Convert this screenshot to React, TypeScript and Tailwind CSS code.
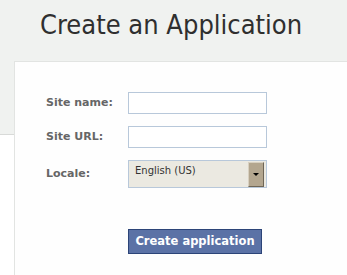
import React from 'react';

export default function App() {
  return (
    <div className="w-[347px] h-[275px] overflow-hidden bg-white font-['DejaVu_Sans',sans-serif]">
      {/* header */}
      <div className="h-[135px] bg-[#f0f2f0] border-b border-[#d8dad8]">
        <h1 className="pl-[40px] pt-[9px] text-[27px] leading-[32px] text-[#2f2f2f] whitespace-nowrap font-['DejaVu_Sans_Condensed','DejaVu_Sans',sans-serif] [font-stretch:condensed]">
          Create an Application
        </h1>
      </div>

      {/* panel */}
      <div className="relative ml-[14px] mt-[-74px] h-[300px] bg-[#fefefe] border-l border-t border-[#e2e4e2] pl-[31px] pt-[30px]">
        <div className="flex items-center h-[22px]">
          <label className="w-[82px] text-[11px] font-bold text-[#666]">Site name:</label>
          <input className="w-[139px] h-[22px] border border-[#b8c8da] bg-white outline-none" />
        </div>
        <div className="flex items-center h-[22px] mt-[12px]">
          <label className="w-[82px] text-[11px] font-bold text-[#666]">Site URL:</label>
          <input className="w-[139px] h-[22px] border border-[#b8c8da] bg-white outline-none" />
        </div>
        <div className="flex items-center h-[28px] mt-[12px]">
          <label className="w-[82px] text-[11px] font-bold text-[#666]">Locale:</label>
          <div className="flex justify-between w-[139px] h-[28px] border border-[#b8c8da] bg-[#ebe9e1]">
            <span className="pl-[6px] pt-[3px] text-[10px] leading-[14px] text-[#333]">English (US)</span>
            <span className="flex items-center justify-center w-[16px] h-[25px] mt-[1px] mr-[2px] bg-[#b3a68f] border border-t-[#d8d0c0] border-l-[#d8d0c0] border-r-[#6f6656] border-b-[#6f6656]">
              <span className="w-0 h-0 border-l-[3px] border-r-[3px] border-t-[3px] border-l-transparent border-r-transparent border-t-black" />
            </span>
          </div>
        </div>
        <div className="pl-[82px] mt-[40px]">
          <button className="w-[134px] h-[25px] bg-[#5b72a6] border border-[#2c4478] text-white text-[11.5px] font-bold leading-none">
            Create application
          </button>
        </div>
      </div>
    </div>
  );
}
